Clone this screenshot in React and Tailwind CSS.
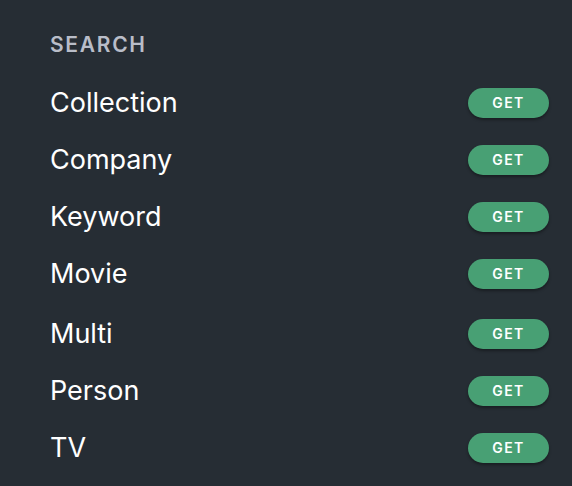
const items = ["Collection", "Company", "Keyword", "Movie", "Multi", "Person", "TV"];

function GetButton() {
  return (
    <button
      type="button"
      className="flex h-[30px] w-[81px] items-center justify-center rounded-full bg-[#48a074] text-[14px] font-semibold tracking-[1.5px] text-white shadow-[0_2px_3px_rgba(0,0,0,0.35)]"
    >
      GET
    </button>
  );
}

export default function App() {
  return (
    <div className="min-h-[486px] w-[572px] bg-[#262d34] pl-[50px] pr-[23px] pt-[30px] font-['Inter',sans-serif]">
      <h2 className="text-[21px] font-semibold leading-[29px] tracking-[1.7px] text-[#b9bdc8]">SEARCH</h2>
      <ul className="mt-[15px]">
        {items.map((name, i) => (
          <li
            key={name}
            className={`flex h-[57px] items-center justify-between ${i === 4 ? "mt-[3px]" : ""}`}
          >
            <span className="text-[27px] leading-none text-white">{name}</span>
            <GetButton />
          </li>
        ))}
      </ul>
    </div>
  );
}
